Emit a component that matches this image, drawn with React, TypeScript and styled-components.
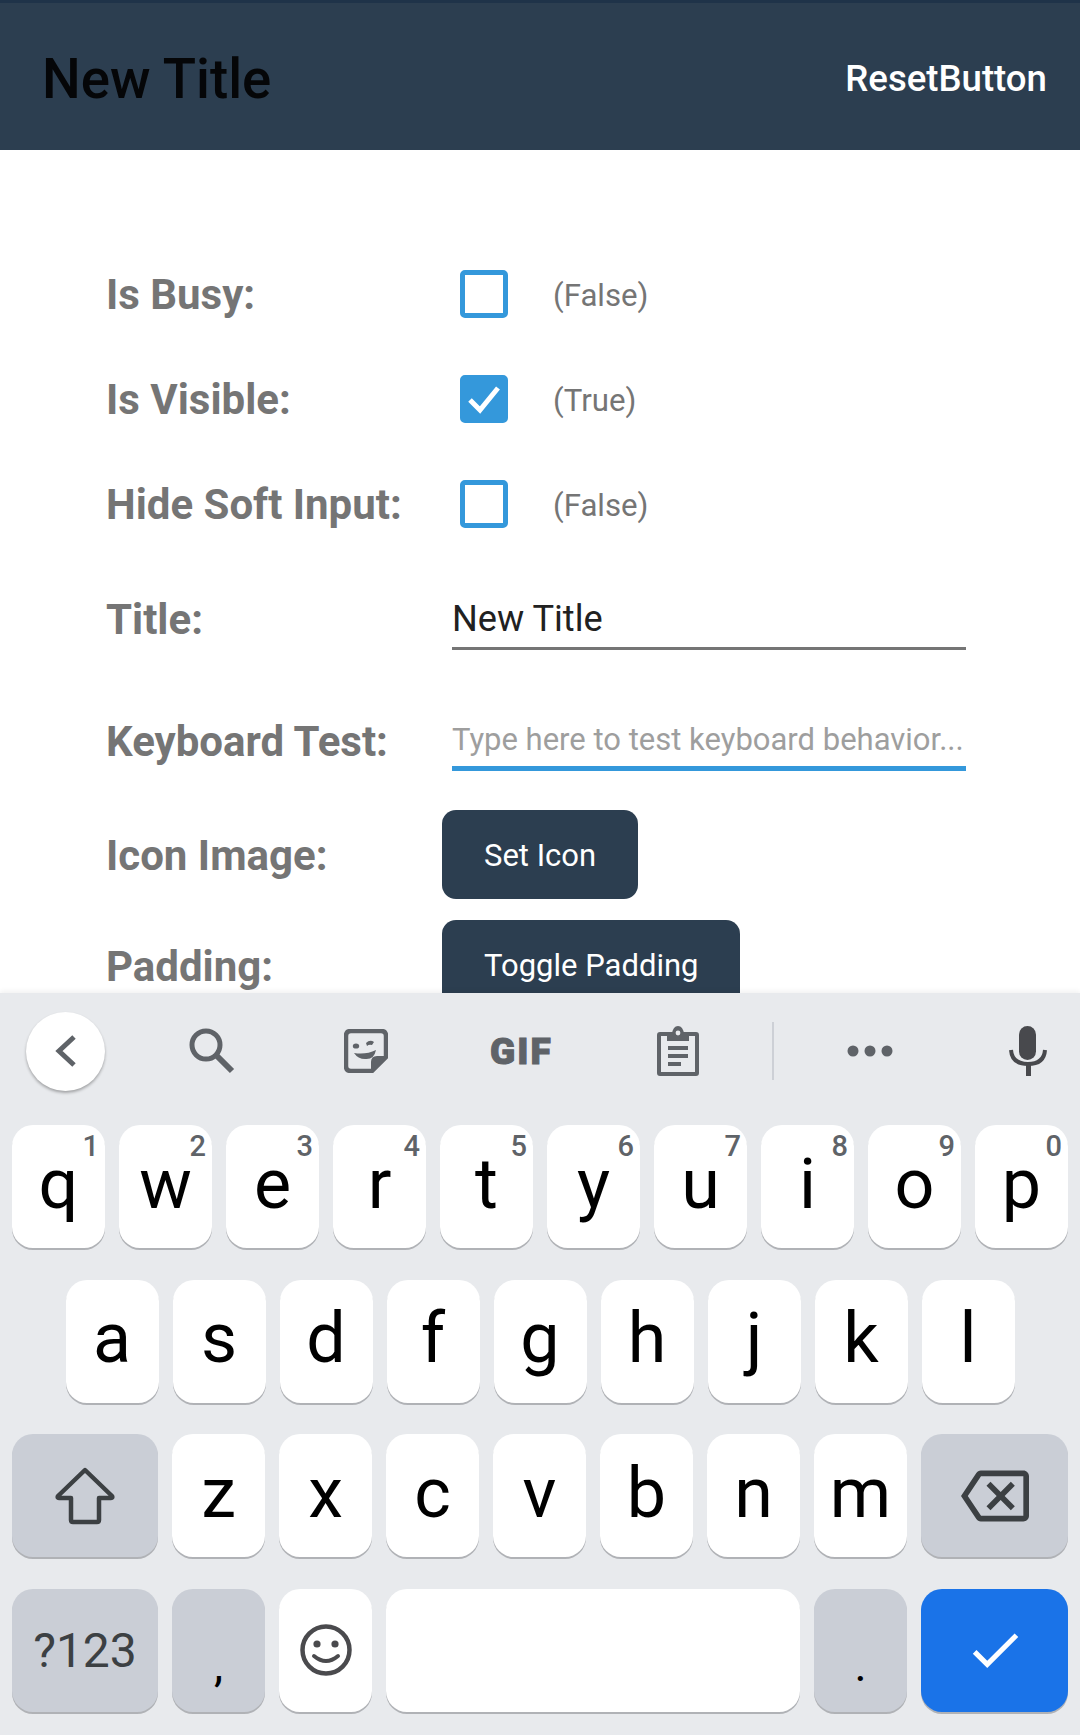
import React from "react";
import styled, { createGlobalStyle } from "styled-components";
import { MdCheck, MdOutlineBackspace } from "react-icons/md";

const GlobalStyle = createGlobalStyle`
  html, body {
    margin: 0;
    padding: 0;
    background: #fff;
  }
  * {
    box-sizing: border-box;
  }
`;

const rowOne = [
  ["q", "1"],
  ["w", "2"],
  ["e", "3"],
  ["r", "4"],
  ["t", "5"],
  ["y", "6"],
  ["u", "7"],
  ["i", "8"],
  ["o", "9"],
  ["p", "0"],
];
const rowTwo = ["a", "s", "d", "f", "g", "h", "j", "k", "l"];
const rowThree = ["z", "x", "c", "v", "b", "n", "m"];

const Flag = ({ label, checked }: { label: string; checked: boolean }) => (
  <Row $h={105}>
    <Label>{label}</Label>
    <CheckBox $checked={checked}>
      {checked && (
        <svg width="38" height="38" viewBox="0 0 38 38">
          <path d="M5 20 L15 30 L33 8" fill="none" stroke="#fff" strokeWidth="5" />
        </svg>
      )}
    </CheckBox>
    <Value>({checked ? "True" : "False"})</Value>
  </Row>
);

const App = () => {
  return (
    <Page>
      <GlobalStyle />
      <Header>
        <Title>New Title</Title>
        <ResetButton>ResetButton</ResetButton>
      </Header>
      <Content>
        <Flag label="Is Busy:" checked={false} />
        <Flag label="Is Visible:" checked={true} />
        <Flag label="Hide Soft Input:" checked={false} />
        <Row $h={124}>
          <Label>Title:</Label>
          <Field>New Title</Field>
        </Row>
        <Row $h={119}>
          <Label $nudge={2}>Keyboard Test:</Label>
          <Field $focused>Type here to test keyboard behavior...</Field>
        </Row>
        <Row $h={109}>
          <Label $nudge={2}>Icon Image:</Label>
          <ActionButton>Set Icon</ActionButton>
        </Row>
        <Row $h={110}>
          <Label $nudge={4}>Padding:</Label>
          <ActionButton>Toggle Padding</ActionButton>
        </Row>
      </Content>
      <Keyboard>
        <Strip>
          <BackCircle>
            <svg width="24" height="34" viewBox="0 0 24 34">
              <path d="M20 3 L5 17 L20 31" fill="none" stroke="#5f6368" strokeWidth="5" />
            </svg>
          </BackCircle>
          <StripItem $left={84} $w={46}>
            <svg width="46" height="46" viewBox="0 0 46 46">
              <circle cx="17" cy="17" r="14" fill="none" stroke="#5f6368" strokeWidth="5" />
              <path d="M27 27 L43 43" stroke="#5f6368" strokeWidth="6" />
            </svg>
          </StripItem>
          <StripItem $left={109} $w={44}>
            <svg width="44" height="44" viewBox="0 0 44 44">
              <path
                d="M7 2 H37 Q42 2 42 7 V28 L28 42 H7 Q2 42 2 37 V7 Q2 2 7 2 Z"
                fill="none"
                stroke="#5f6368"
                strokeWidth="4.5"
              />
              <path d="M42 27 L27 42 V33 Q27 27 33 27 Z" fill="#5f6368" />
              <ellipse cx="12" cy="17" rx="3.2" ry="2.6" fill="#5f6368" />
              <path d="M22 14 Q26 10 30 13 L28 16 Q25 15 23 17 Z" fill="#5f6368" />
              <path d="M10 24 Q22 26 32 21 Q30 31 21 30 Q14 30 10 24 Z" fill="#5f6368" />
            </svg>
          </StripItem>
          <GifLabel>GIF</GifLabel>
          <StripItem $left={105} $w={42}>
            <svg width="42" height="50" viewBox="0 0 42 50">
              <path
                d="M3 8 H39 Q40 8 40 9 V47 Q40 48 39 48 H3 Q2 48 2 47 V9 Q2 8 3 8 Z"
                fill="none"
                stroke="#5f6368"
                strokeWidth="4"
              />
              <path d="M10 8 H15 Q16 0 21 0 Q26 0 27 8 H32 V15 H10 Z" fill="#5f6368" />
              <circle cx="21" cy="7" r="2.4" fill="#e8eaed" />
              <path d="M11 20 H31 V24 H11 Z M11 28 H31 V32 H11 Z M11 36 H24 V40 H11 Z" fill="#5f6368" />
            </svg>
          </StripItem>
          <StripDivider />
          <StripItem $left={73} $w={46}>
            <svg width="46" height="12" viewBox="0 0 46 12">
              <circle cx="6" cy="6" r="5.5" fill="#5f6368" />
              <circle cx="23" cy="6" r="5.5" fill="#5f6368" />
              <circle cx="40" cy="6" r="5.5" fill="#5f6368" />
            </svg>
          </StripItem>
          <StripItem $left={116} $w={38}>
            <svg width="38" height="50" viewBox="0 0 38 50">
              <rect x="10" y="0" width="17" height="34" rx="8.5" fill="#48494d" />
              <path d="M2 24 Q3 38 19 38 Q35 38 36 24" fill="none" stroke="#48494d" strokeWidth="4" />
              <rect x="17" y="38" width="5" height="12" fill="#48494d" />
            </svg>
          </StripItem>
        </Strip>
        <KeyRow>
          {rowOne.map(([letter, digit]) => (
            <Key key={letter}>
              {letter}
              <Digit>{digit}</Digit>
            </Key>
          ))}
        </KeyRow>
        <KeyRow $center>
          {rowTwo.map((letter) => (
            <Key key={letter}>{letter}</Key>
          ))}
        </KeyRow>
        <KeyRow>
          <Key $w={146} $fn $icon>
            <svg width="60" height="58" viewBox="0 0 60 58">
              <path
                d="M30 3 L57 29 Q58 31 56 31 H44 V53 Q44 55 42 55 H18 Q16 55 16 53 V31 H4 Q2 31 3 29 Z"
                fill="none"
                stroke="#3c4043"
                strokeWidth="4.5"
                strokeLinejoin="round"
              />
            </svg>
          </Key>
          {rowThree.map((letter) => (
            <Key key={letter}>{letter}</Key>
          ))}
          <Key $w={147} $fn $icon>
            <MdOutlineBackspace size={68} color="#3c4043" />
          </Key>
        </KeyRow>
        <KeyRow>
          <Key $w={146} $fn $small>
            ?123
          </Key>
          <Key $fn $low>
            ,
          </Key>
          <Key $icon>
            <svg width="54" height="54" viewBox="0 0 54 54">
              <circle cx="27" cy="27" r="23.5" fill="none" stroke="#4a4a4d" strokeWidth="4.5" />
              <circle cx="18" cy="21" r="3.6" fill="#4a4a4d" />
              <circle cx="36" cy="21" r="3.6" fill="#4a4a4d" />
              <path d="M15 33 Q27 43 39 33" fill="none" stroke="#4a4a4d" strokeWidth="4" strokeLinecap="round" />
            </svg>
          </Key>
          <Key $w={414} />
          <Key $fn $low>
            .
          </Key>
          <EnterKey $icon>
            <MdCheck size={62} color="#fff" />
          </EnterKey>
        </KeyRow>
      </Keyboard>
    </Page>
  );
};

export default App;

const Page = styled.div`
  width: 1080px;
  height: 1735px;
  display: flex;
  flex-direction: column;
  overflow: hidden;
  font-family: Roboto, "Liberation Sans", sans-serif;
`;

const Header = styled.header`
  height: 150px;
  flex: none;
  background: #2c3e50;
  border-top: 3px solid #1f3349;
  display: flex;
  align-items: center;
  justify-content: space-between;
  padding: 4px 33px 0 42px;
`;

const Title = styled.h1`
  margin: 0;
  font-size: 54.6px;
  font-weight: 500;
  color: #050608;
`;

const ResetButton = styled.span`
  font-size: 36.6px;
  font-weight: 500;
  color: #fff;
`;

const Content = styled.main`
  flex: 1;
  min-height: 0;
  overflow: hidden;
  padding: 92px 0 0 106px;
`;

const Row = styled.div<{ $h: number }>`
  height: ${(props) => props.$h}px;
  display: flex;
  align-items: center;
`;

const Label = styled.div<{ $nudge?: number }>`
  width: 336px;
  flex: none;
  padding-top: ${(props) => props.$nudge || 0}px;
  font-size: 42px;
  font-weight: 700;
  color: #757575;
`;

const CheckBox = styled.div<{ $checked: boolean }>`
  width: 48px;
  height: 48px;
  margin: 0 0 2px 18px;
  border: 5px solid #3498db;
  border-radius: 5px;
  background: ${(props) => (props.$checked ? "#3498db" : "transparent")};
  display: flex;
  align-items: center;
  justify-content: center;
`;

const Value = styled.div`
  margin-left: 45px;
  padding-top: 2px;
  font-size: 31.2px;
  color: #757575;
`;

const Field = styled.div<{ $focused?: boolean }>`
  width: 514px;
  height: 61px;
  margin-left: 10px;
  padding-top: 2px;
  display: flex;
  align-items: center;
  white-space: nowrap;
  border-bottom: ${(props) => (props.$focused ? "5px solid #3498db" : "3px solid #757575")};
  font-size: ${(props) => (props.$focused ? "31px" : "36.2px")};
  color: ${(props) => (props.$focused ? "#9e9e9e" : "#212121")};
`;

const ActionButton = styled.div`
  height: 89px;
  padding: 2px 42px 0;
  display: flex;
  align-items: center;
  background: #2c3e50;
  border-radius: 14px;
  font-size: 31px;
  color: #fff;
  flex: none;
`;

const Keyboard = styled.section`
  height: 742px;
  flex: none;
  position: relative;
  background: #e8eaed;
  box-shadow: 0 -2px 5px rgba(0, 0, 0, 0.06);
`;

const Strip = styled.div`
  height: 132px;
  padding: 0 0 16px 26px;
  display: flex;
  align-items: center;
`;

const BackCircle = styled.div`
  width: 79px;
  height: 79px;
  flex: none;
  border-radius: 50%;
  background: #fff;
  box-shadow: 0 2px 3px rgba(0, 0, 0, 0.3);
  display: flex;
  align-items: center;
  justify-content: center;
`;

const StripItem = styled.div<{ $left: number; $w: number }>`
  flex: none;
  width: ${(props) => props.$w}px;
  margin-left: ${(props) => props.$left}px;
  display: flex;
  align-items: center;
  justify-content: center;
`;

const GifLabel = styled.div`
  width: 62px;
  flex: none;
  margin-left: 102px;
  font-size: 37px;
  font-weight: 900;
  letter-spacing: 2px;
  -webkit-text-stroke: 1px #5f6368;
  color: #5f6368;
`;

const StripDivider = styled.div`
  width: 2px;
  height: 58px;
  flex: none;
  margin-left: 73px;
  background: #cdd0d6;
`;

const KeyRow = styled.div<{ $center?: boolean }>`
  height: 124px;
  margin-bottom: 30.67px;
  padding: 0 12px;
  display: flex;
  gap: 14px;
  justify-content: ${(props) => (props.$center ? "center" : "flex-start")};
`;

const Key = styled.div<{ $w?: number; $fn?: boolean; $small?: boolean; $low?: boolean; $icon?: boolean }>`
  position: relative;
  width: ${(props) => props.$w || 93}px;
  height: 123px;
  flex: none;
  display: flex;
  align-items: ${(props) => (props.$low ? "flex-end" : "center")};
  justify-content: center;
  padding-bottom: ${(props) => (props.$low ? "20px" : props.$icon || props.$small ? "0" : "6px")};
  background: ${(props) => (props.$fn ? "#caced6" : "#fff")};
  border-radius: 21px;
  box-shadow: 0 2px 0 #b0b2b6;
  font-size: ${(props) => (props.$small ? "48px" : props.$low ? "46px" : "70px")};
  color: ${(props) => (props.$small ? "#3c4043" : "#000")};
`;

const Digit = styled.span`
  position: absolute;
  top: 4px;
  right: 6px;
  font-size: 29px;
  font-weight: 500;
  color: #5f6368;
`;

const EnterKey = styled(Key)`
  width: 147px;
  background: #1a73e8;
`;
